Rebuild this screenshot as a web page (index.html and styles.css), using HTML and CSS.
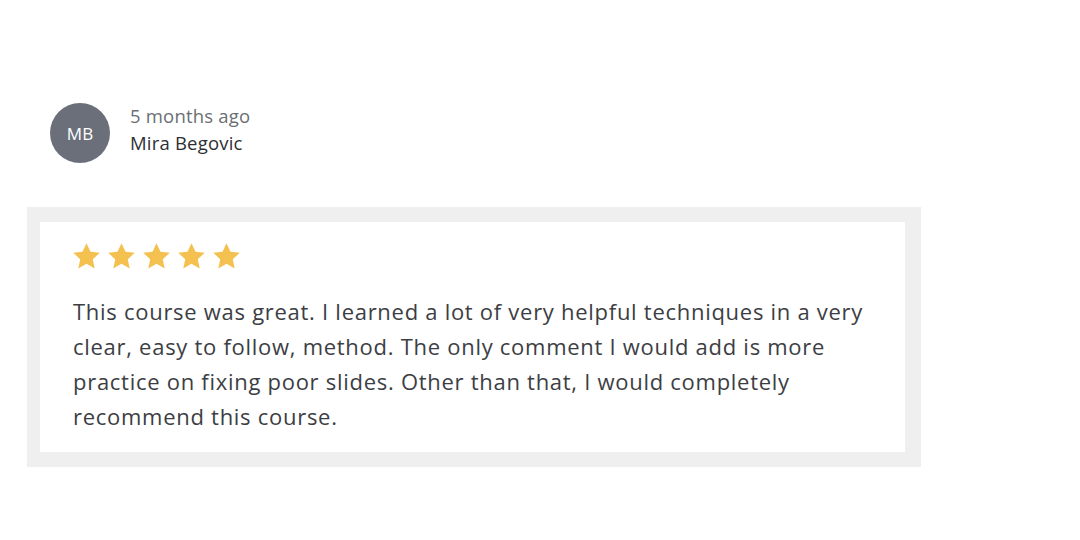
FILE: index.html
```html
<!DOCTYPE html>
<html lang="en">
<head>
    <meta charset="UTF-8">
    <title>Review</title>
    <link rel="stylesheet" href="styles.css">
</head>
<body>
    <div class="review">
        <div class="review-head">
            <div class="avatar">MB</div>
            <div class="meta">
                <span class="when">5 months ago</span>
                <span class="name">Mira Begovic</span>
            </div>
        </div>

        <div class="review-box">
            <div class="review-body">
                <div class="stars">
                    <svg viewBox="0 0 24 24"><path d="M12 1l3.3 7.1 7.7.8-5.8 5.3 1.6 7.7L12 18l-6.8 3.9 1.6-7.7L1 8.9l7.7-.8z"/></svg>
                    <svg viewBox="0 0 24 24"><path d="M12 1l3.3 7.1 7.7.8-5.8 5.3 1.6 7.7L12 18l-6.8 3.9 1.6-7.7L1 8.9l7.7-.8z"/></svg>
                    <svg viewBox="0 0 24 24"><path d="M12 1l3.3 7.1 7.7.8-5.8 5.3 1.6 7.7L12 18l-6.8 3.9 1.6-7.7L1 8.9l7.7-.8z"/></svg>
                    <svg viewBox="0 0 24 24"><path d="M12 1l3.3 7.1 7.7.8-5.8 5.3 1.6 7.7L12 18l-6.8 3.9 1.6-7.7L1 8.9l7.7-.8z"/></svg>
                    <svg viewBox="0 0 24 24"><path d="M12 1l3.3 7.1 7.7.8-5.8 5.3 1.6 7.7L12 18l-6.8 3.9 1.6-7.7L1 8.9l7.7-.8z"/></svg>
                </div>
                <p class="comment">This course was great. I learned a lot of very helpful techniques in a very clear, easy to follow, method. The only comment I would add is more practice on fixing poor slides. Other than that, I would completely recommend this course.</p>
            </div>
        </div>
    </div>
</body>
</html>
```

FILE: styles.css
```css
body {
    margin: 0;
    background-color: #fff;
    font-family: "Open Sans", "Noto Sans", Arial, sans-serif;
    color: #3c3e44;
}
.review {
    padding: 103px 0 0 27px;
}
.review-head {
    display: flex;
    align-items: center;
    padding-left: 23px;
}
.avatar {
    width: 60px;
    height: 60px;
    border-radius: 50%;
    background-color: #6a6f7a;
    color: #fff;
    font-size: 17px;
    display: flex;
    align-items: center;
    justify-content: center;
}
.meta {
    display: flex;
    flex-direction: column;
    margin-left: 20px;
    margin-top: -8px;
    font-size: 18.5px;
    line-height: 27px;
    letter-spacing: 0.2px;
}
.when {
    color: #6a6f73;
}
.name {
    color: #2d2f33;
}
.review-box {
    margin-top: 44px;
    width: 894px;
    box-sizing: border-box;
    padding: 15px 16px 15px 13px;
    background-color: #efefef;
}
.review-body {
    background-color: #fff;
    height: 230px;
    box-sizing: border-box;
    padding: 18px 32px 0 33px;
}
.stars {
    display: flex;
    gap: 6px;
    height: 32px;
    align-items: center;
    margin-left: -1px;
}
.stars svg {
    width: 29px;
    height: 29px;
    fill: #f4c150;
}
.comment {
    margin: 22px 0 0;
    font-size: 22px;
    line-height: 35px;
    letter-spacing: 0.72px;
    color: #3c3e44;
}
```
